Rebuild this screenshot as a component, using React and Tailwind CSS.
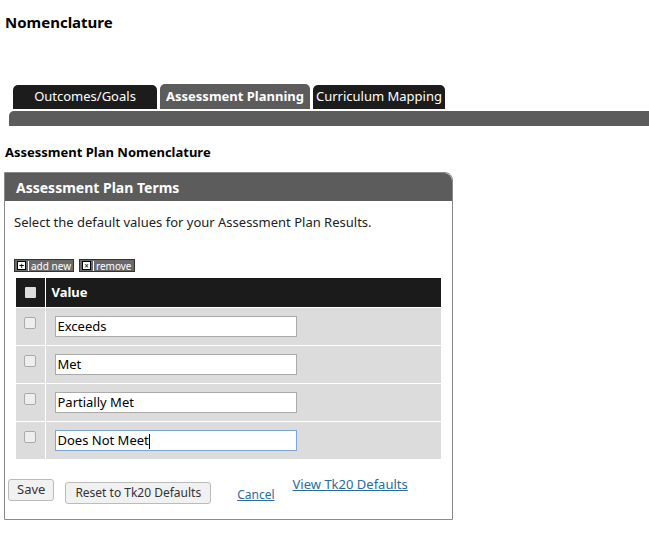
export default function App() {
  const rows = ["Exceeds", "Met", "Partially Met", "Does Not Meet"];
  return (
    <div className="w-[649px] h-[538px] bg-white text-[13px] text-black font-[family-name:'Liberation_Sans',Arial,sans-serif] overflow-hidden">
      <h1 className="pl-[5px] pt-[13px] text-[15px] font-bold leading-[18px]">Nomenclature</h1>

      <div className="mt-[53px] flex gap-[3px] pl-[13px] h-[25px] items-end">
        <div className="w-[144px] h-[24px] bg-[#1c1c1c] text-white rounded-t-[5px] flex items-center justify-center text-[13px]">Outcomes/Goals</div>
        <div className="w-[150px] h-[25px] bg-[#5c5c5c] text-white font-bold rounded-t-[5px] flex items-start pt-[3px] justify-center text-[13px]">Assessment Planning</div>
        <div className="w-[132px] h-[24px] bg-[#1c1c1c] text-white rounded-t-[5px] flex items-center justify-center text-[13px]">Curriculum Mapping</div>
      </div>
      <div className="ml-[9px] mt-[2px] h-[15px] bg-[#5c5c5c] rounded-tl-[5px]" />

      <h2 className="pl-[5px] mt-[18px] font-bold text-[13px] leading-[16px]">Assessment Plan Nomenclature</h2>

      <div className="ml-[4px] mt-[12px] w-[449px] h-[348px] border border-[#8a8a8a] rounded-tr-[8px]">
        <div className="h-[28px] bg-[#5c5c5c] rounded-tr-[8px] text-white font-bold text-[14px] flex items-center pl-[11px]">Assessment Plan Terms</div>
        <p className="pl-[9px] mt-[13px] text-[13px] text-[#222] leading-[16px]">Select the default values for your Assessment Plan Results.</p>

        <div className="mt-[29px] ml-[9px] flex gap-[5px] items-end">
          <span className="h-[13px] flex items-center bg-[#6a6a6a] border border-[#333] text-white text-[10px] leading-none pr-[2px]">
            <span className="mx-[2px] w-[9px] h-[9px] bg-white border border-black text-black text-[9px] leading-[7px] text-center font-bold">+</span>
            <span className="border-l border-white pl-[2px]">add new</span>
          </span>
          <span className="h-[13px] flex items-center bg-[#6a6a6a] border border-[#333] text-white text-[10px] leading-none pr-[2px]">
            <span className="mx-[2px] w-[9px] h-[9px] bg-white border border-black text-black text-[8px] leading-[7px] text-center">×</span>
            <span className="border-l border-white pl-[2px]">remove</span>
          </span>
        </div>

        <table className="ml-[11px] mt-[6px] w-[425px] border-collapse">
          <thead>
            <tr className="h-[29px] bg-[#1b1b1b] text-white">
              <th className="w-[29px] border-r border-white">
                <span className="block mx-auto w-[11px] h-[11px] bg-[#ddd] rounded-[1px]" />
              </th>
              <th className="text-left pl-[6px] font-bold text-[13px]">Value</th>
            </tr>
          </thead>
          <tbody>
            {rows.map((r, i) => (
              <tr key={r} className="h-[38px] bg-[#dcdcdc] border-t border-white">
                <td className="border-r border-white align-top pt-[9px]">
                  <span className="block mx-auto w-[12px] h-[12px] bg-[#eee] border border-[#aaa] rounded-[2px]" />
                </td>
                <td className="pl-[9px]">
                  <div className={`w-[242px] h-[21px] bg-white border ${i === 3 ? "border-[#7aa6d8]" : "border-[#aaa]"} text-[13px] pl-[2px] leading-[19px]`}>
                    {r}{i === 3 && <span className="inline-block w-px h-[15px] bg-black align-middle" />}
                  </div>
                </td>
              </tr>
            ))}
          </tbody>
        </table>

        <div className="mt-[20px] flex items-start pl-[3px] text-[13px]">
          <span className="h-[22px] px-[8px] border border-[#bbb] rounded-[3px] bg-[#f1f1f1] flex items-center text-[#333]">Save</span>
          <span className="ml-[11px] mt-[3px] h-[22px] px-[9px] border border-[#bbb] rounded-[3px] bg-[#f1f1f1] flex items-center text-[#333] text-[12px]">Reset to Tk20 Defaults</span>
          <span className="ml-[26px] mt-[7px] text-[#2a6d9c] underline text-[12px]">Cancel</span>
          <span className="ml-[18px] mt-[-4px] text-[#2a6d9c] underline text-[13px]">View Tk20 Defaults</span>
        </div>
      </div>
    </div>
  );
}
